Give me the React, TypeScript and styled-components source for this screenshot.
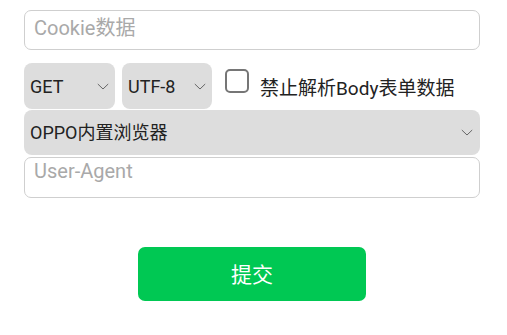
import React from "react";
import styled, { createGlobalStyle } from "styled-components";

const Global = createGlobalStyle`
  html, body { margin: 0; padding: 0; background: #fff; }
  body { font-family: Roboto, "Noto Sans CJK SC", sans-serif; }
  * { box-sizing: border-box; }
`;

const Form = styled.form`
  width: 456px;
  margin-left: 24px;
  padding-top: 10px;
  display: flex;
  flex-direction: column;
`;

const TextInput = styled.input`
  height: 40px;
  width: 100%;
  border: 1px solid #cfcfcf;
  border-radius: 7px;
  padding: 0 9px 4px;
  font: 20px Roboto, "Noto Sans CJK SC", sans-serif;
  color: #222;
  outline: none;
  &::placeholder { color: #a9a9a9; }
`;

const TextArea = styled.textarea`
  height: 41px;
  width: 100%;
  margin-top: 2px;
  border: 1px solid #cfcfcf;
  border-radius: 7px;
  padding: 1px 9px;
  font: 20px Roboto, "Noto Sans CJK SC", sans-serif;
  line-height: 24px;
  color: #222;
  resize: none;
  outline: none;
  display: block;
  &::placeholder { color: #a9a9a9; }
`;

const Row = styled.div`
  display: flex;
  align-items: center;
  margin-top: 13px;
  height: 46px;
`;

const SelectBox = styled.label<{ $w?: number; $gap?: number }>`
  display: flex;
  align-items: center;
  width: ${(p) => (p.$w ? `${p.$w}px` : "100%")};
  height: ${(p) => (p.$w ? 46 : 45)}px;
  margin-left: ${(p) => p.$gap ?? 0}px;
  background: #dddddd;
  border-radius: 8px;
  padding: 0 6px 0 6px;
  flex-shrink: 0;
`;

const NativeSelect = styled.select`
  appearance: none;
  -webkit-appearance: none;
  flex: 1;
  min-width: 0;
  background: transparent;
  border: none;
  outline: none;
  padding: 0;
  font: 18px Roboto, "Noto Sans CJK SC", sans-serif;
  color: #222;
`;

const Chevron = () => (
  <svg width="12" height="7" viewBox="0 0 12 7" fill="none">
    <path d="M0.8 1 L6 6 L11.2 1" stroke="#666" strokeWidth="1" />
  </svg>
);

const CheckWrap = styled.label`
  display: flex;
  align-items: center;
  margin-left: 13px;
  font: 19px Roboto, "Noto Sans CJK SC", sans-serif;
  color: #222;
`;

const Box = styled.input`
  appearance: none;
  -webkit-appearance: none;
  width: 24px;
  height: 24px;
  margin: 0 11px 0 0;
  border: 2px solid #767676;
  border-radius: 5px;
  background: #fff;
  position: relative;
  top: -5px;
`;

const OppoSelect = styled(SelectBox)`
  margin-top: 1px;
  padding-right: 7px;
`;

const Submit = styled.button`
  align-self: center;
  margin-top: 49px;
  width: 228px;
  height: 54px;
  border: none;
  border-radius: 7px;
  background: #00c853;
  color: #fff;
  font: 21px Roboto, "Noto Sans CJK SC", sans-serif;
  padding-bottom: 3px;
`;

export default function App() {
  return (
    <>
      <Global />
      <Form onSubmit={(e) => e.preventDefault()}>
        <TextInput placeholder="Cookie数据" />
        <Row>
          <SelectBox $w={91}>
            <NativeSelect defaultValue="GET">
              <option>GET</option>
              <option>POST</option>
            </NativeSelect>
            <Chevron />
          </SelectBox>
          <SelectBox $w={90} $gap={7}>
            <NativeSelect defaultValue="UTF-8">
              <option>UTF-8</option>
              <option>GBK</option>
            </NativeSelect>
            <Chevron />
          </SelectBox>
          <CheckWrap>
            <Box type="checkbox" />
            禁止解析Body表单数据
          </CheckWrap>
        </Row>
        <OppoSelect>
          <NativeSelect defaultValue="OPPO内置浏览器">
            <option>OPPO内置浏览器</option>
          </NativeSelect>
          <Chevron />
        </OppoSelect>
        <TextArea placeholder="User-Agent" />
        <Submit type="submit">提交</Submit>
      </Form>
    </>
  );
}
